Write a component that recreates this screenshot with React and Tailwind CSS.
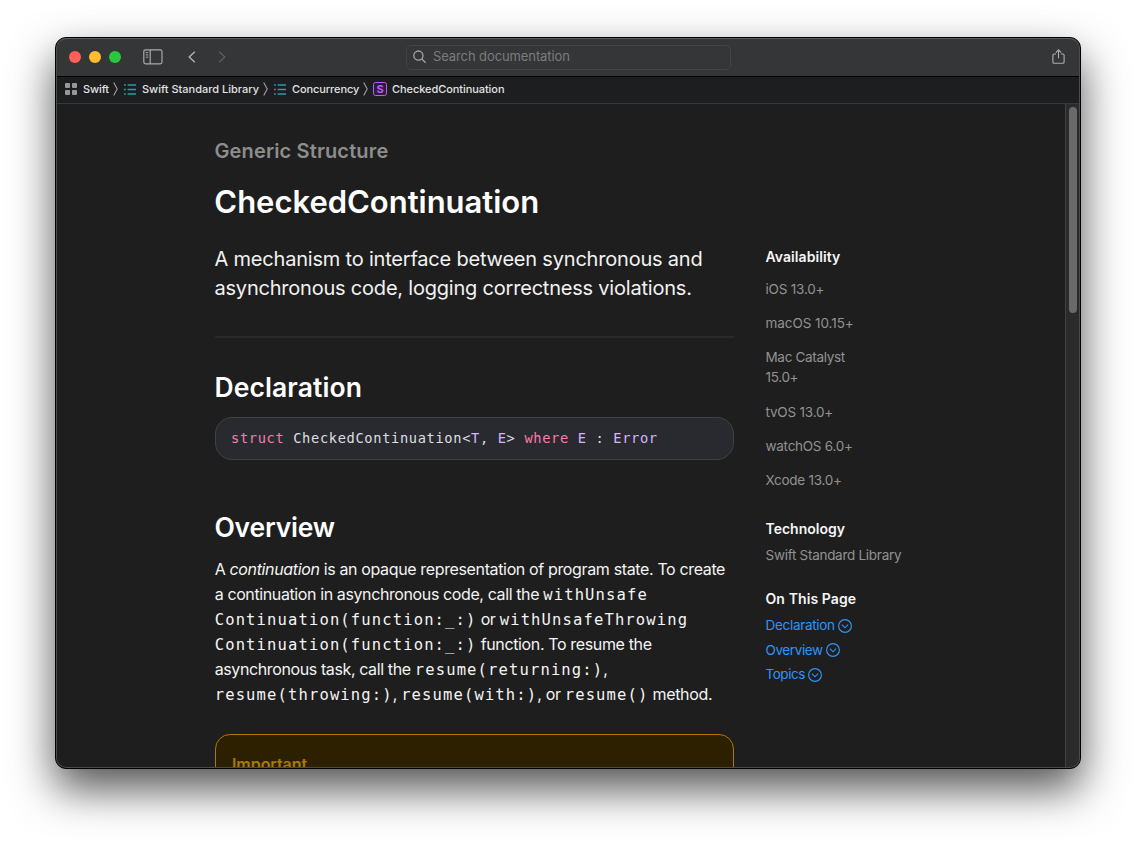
import React from "react";

const availability = [
  { name: "iOS 13.0+", cls: "tracking-[-0.2px]" },
  { name: "macOS 10.15+", cls: "tracking-[-0.06px]" },
  { name: "Mac Catalyst 15.0+", cls: "tracking-[-0.32px] -mt-[0.6px] mb-[0.6px]" },
  { name: "tvOS 13.0+", cls: "tracking-[-0.2px]" },
  { name: "watchOS 6.0+", cls: "tracking-[-0.26px]" },
  { name: "Xcode 13.0+", cls: "tracking-[-0.26px]" },
];

const sections = [
  { name: "Declaration", cls: "tracking-[-0.3px]" },
  { name: "Overview", cls: "tracking-[-0.4px]" },
  { name: "Topics", cls: "tracking-[-0.45px]" },
];

function Mono({ children }) {
  return (
    <code className="font-['DejaVu_Sans_Mono',monospace] text-[15.5px] leading-none tracking-[1.14px]">
      {children}
    </code>
  );
}

function Line({ children }) {
  return <span className="block h-[25px] whitespace-nowrap leading-[25px]">{children}</span>;
}

function SidebarIcon() {
  return (
    <svg width="20" height="16" viewBox="0 0 20 16" fill="none" stroke="#a9aaab" strokeWidth="1.2">
      <rect x="0.8" y="0.8" width="18.2" height="14" rx="1.8" />
      <path d="M7.2 1v14" />
      <path d="M2.8 3.6h2.4M2.8 5.9h2.4M2.8 8.2h2.4" strokeWidth="1" />
    </svg>
  );
}

function GridIcon() {
  return (
    <svg width="12" height="12" viewBox="0 0 12 12" fill="#98989a">
      <rect x="0" y="0" width="5" height="5" rx="1" />
      <rect x="7" y="0" width="5" height="5" rx="1" />
      <rect x="0" y="7" width="5" height="5" rx="1" />
      <rect x="7" y="7" width="5" height="5" rx="1" />
    </svg>
  );
}

function ListIcon() {
  return (
    <svg width="12" height="11" viewBox="0 0 12 11" fill="none" stroke="#2e9ba3" strokeWidth="1.5">
      <path d="M0 1h1.8M0 5.5h1.8M0 10h1.8M3.6 1H12M3.6 5.5H12M3.6 10H12" />
    </svg>
  );
}

function Separator() {
  return (
    <svg width="5" height="14" viewBox="0 0 5 14" fill="none" stroke="#a0a0a2" strokeWidth="1.1">
      <path d="M0.7 0.6L4.2 7L0.7 13.4" />
    </svg>
  );
}

function CircleDown() {
  return (
    <svg width="14" height="14" viewBox="0 0 14 14" fill="none" stroke="#2f94f8" strokeWidth="1.15">
      <circle cx="7" cy="7" r="6.4" />
      <path d="M3.9 5.7L7 8.8L10.1 5.7" />
    </svg>
  );
}

function TitleBar() {
  return (
    <header className="flex h-[39px] shrink-0 items-center border-b border-black bg-[#353638] pl-[13px] pr-[15px]">
      <div className="flex gap-2">
        <span className="size-3 rounded-full bg-[#ff5f57]" />
        <span className="size-3 rounded-full bg-[#febc2e]" />
        <span className="size-3 rounded-full bg-[#28c840]" />
      </div>
      <div className="ml-[21.6px] flex items-center">
        <SidebarIcon />
        <svg className="ml-[25px]" width="8" height="12" viewBox="0 0 8 12" fill="none" stroke="#b5b6b7" strokeWidth="1.3">
          <path d="M6.8 0.8L1.2 6L6.8 11.2" />
        </svg>
        <svg className="ml-[22px]" width="8" height="12" viewBox="0 0 8 12" fill="none" stroke="#5c5d5f" strokeWidth="1.3">
          <path d="M1.2 0.8L6.8 6L1.2 11.2" />
        </svg>
      </div>
      <div className="ml-[180.4px] flex h-[25px] w-[325px] items-center rounded-[5px] border border-[#434446] pl-[6px]">
        <svg width="14" height="14" viewBox="0 0 14 14" fill="none" stroke="#a3a4a5" strokeWidth="1.3">
          <circle cx="5.4" cy="5.6" r="4.6" />
          <path d="M8.8 9L12.6 12.8" />
        </svg>
        <span className="ml-[6px] whitespace-nowrap text-[13px] tracking-[-0.1px] text-[#7b7c7e]">Search documentation</span>
      </div>
      <svg className="mb-[2px] ml-auto" width="13" height="15" viewBox="0 0 13 15" fill="none" stroke="#adaeaf" strokeWidth="1.1">
        <path d="M4 5H2.2Q0.9 5 0.9 6.3V12.9Q0.9 14.2 2.2 14.2H10.8Q12.1 14.2 12.1 12.9V6.3Q12.1 5 10.8 5H9" />
        <path d="M6.5 9.3V1M3.8 3.6L6.5 0.9L9.2 3.6" />
      </svg>
    </header>
  );
}

function Breadcrumbs() {
  return (
    <nav className="flex h-[27px] shrink-0 items-center border-b border-[#38393b] bg-[#1d1e20] pb-[2px] pl-[9px] text-[11px] font-medium text-[#e2e2e3]">
      <GridIcon />
      <span className="ml-[6px] w-[27px] tracking-[-0.1px]">Swift</span>
      <span className="ml-[3px]"><Separator /></span>
      <span className="ml-[6px]"><ListIcon /></span>
      <span className="ml-[6px] w-[118px] whitespace-nowrap">Swift Standard Library</span>
      <span className="ml-[3px]"><Separator /></span>
      <span className="ml-[6px]"><ListIcon /></span>
      <span className="ml-[6px] w-[68px] tracking-[-0.1px]">Concurrency</span>
      <span className="ml-[3px]"><Separator /></span>
      <span className="ml-[5px] flex size-[14px] items-center justify-center rounded-[2.5px] border border-[#bf5af2] bg-[#2d1c38] text-[11px] font-bold leading-none text-[#bf5af2]">
        S
      </span>
      <span className="ml-[5px] tracking-[-0.07px]">CheckedContinuation</span>
    </nav>
  );
}

function Article() {
  return (
    <article className="w-[519px] shrink-0">
      <p className="-ml-[0.5px] mt-[35px] h-6 text-[20px] font-semibold leading-6 tracking-[0.14px] text-[#8d8d8d]">Generic Structure</p>
      <h1 className="-ml-[0.7px] mt-[20px] h-[38px] text-[31px] font-semibold leading-[38px] tracking-[-0.02px]">CheckedContinuation</h1>
      <div className="-ml-[0.5px] mt-[24px] text-[20px] leading-[29px] text-[#f2f2f2]">
        <span className="block whitespace-nowrap tracking-[-0.2px]">A mechanism to interface between synchronous and</span>
        <span className="block whitespace-nowrap tracking-[-0.21px]">asynchronous code, logging correctness violations.</span>
      </div>
      <hr className="mt-[33px] border-0 border-t-2 border-[#292929]" />
      <h2 className="-ml-[0.6px] mt-[33px] h-8 text-[26.5px] font-semibold leading-8 tracking-[0.1px]">Declaration</h2>
      <pre className="mt-[14px] flex h-[43px] items-center rounded-[17px] border border-[#414146] bg-[#292a2f] px-[15px] font-['DejaVu_Sans_Mono',monospace] text-[13.7px] tracking-[0.65px] text-[#dedee0]">
        <code className="font-['DejaVu_Sans_Mono',monospace]">
          <span className="text-[#fc79ac]">struct</span>
          {" CheckedContinuation<"}
          <span className="text-[#d6b6fb]">T</span>
          {", "}
          <span className="text-[#d6b6fb]">E</span>
          {"> "}
          <span className="text-[#fc79ac]">where</span>{" "}
          <span className="text-[#d6b6fb]">E</span>
          {" : "}
          <span className="text-[#d6b6fb]">Error</span>
        </code>
      </pre>
      <h2 className="-ml-[0.6px] mt-[51px] h-8 text-[26.5px] font-semibold leading-8 tracking-[-0.2px]">Overview</h2>
      <p className="-ml-[0.3px] mt-[14px] text-[16px] tracking-[-0.36px] text-[#f4f4f4]">
        <Line>A <em>continuation</em> is an opaque representation of program state. To create</Line>
        <Line><span className="tracking-[-0.39px]">a continuation in asynchronous code, call the </span><Mono>withUnsafe</Mono></Line>
        <Line><Mono>Continuation(function:_:)</Mono> or <Mono>withUnsafeThrowing</Mono></Line>
        <Line><Mono>Continuation(function:_:)</Mono> function. To resume the</Line>
        <Line><span className="tracking-[-0.39px]">asynchronous task, call the </span><Mono>resume(returning:)</Mono>,</Line>
        <Line><Mono>resume(throwing:)</Mono>, <Mono>resume(with:)</Mono>, or <Mono>resume()</Mono> method.</Line>
      </p>
      <section className="mt-[27px] h-[120px] rounded-[15px] border border-[#a97b06] bg-[#2c2000] px-4 pt-[17px]">
        <h3 className="text-[16px] font-semibold leading-6 tracking-[-0.06px] text-[#a97b06]">Important</h3>
      </section>
    </article>
  );
}

function Aside() {
  return (
    <aside className="ml-[31.5px] mt-[143px] w-[160px] text-[13.5px] leading-5 text-[#929292]">
      <h4 className="text-[14px] font-semibold tracking-[0.08px] text-[#f5f5f5]">Availability</h4>
      <ul className="mt-[12px] flex w-[100px] flex-col gap-[14.3px]">
        {availability.map((a) => (
          <li key={a.name} className={a.cls}>{a.name}</li>
        ))}
      </ul>
      <h4 className="mt-[29px] text-[14px] font-semibold text-[#f5f5f5]">Technology</h4>
      <p className="mt-[6px] whitespace-nowrap tracking-[-0.28px]">Swift Standard Library</p>
      <h4 className="mt-[24px] text-[14px] font-semibold tracking-[0.1px] text-[#f5f5f5]">On This Page</h4>
      <ul className="mt-[6px] flex flex-col gap-[4.5px] text-[#2f94f8]">
        {sections.map((s) => (
          <li key={s.name} className="flex items-center gap-[3.5px]">
            <span className={s.cls}>{s.name}</span>
            <span className="pt-px"><CircleDown /></span>
          </li>
        ))}
      </ul>
    </aside>
  );
}

export default function App() {
  return (
    <div className="h-[842px] w-[1136px] overflow-hidden bg-white pl-[55px] pt-[37px] font-['Inter',sans-serif] text-white">
      <div className="relative flex h-[732px] w-[1026px] flex-col overflow-hidden rounded-[11px] border border-black bg-[#1e1e1e] shadow-[0_20px_44px_rgba(0,0,0,0.68)]">
        <TitleBar />
        <Breadcrumbs />
        <div className="flex min-h-0 flex-1 overflow-hidden">
          <main className="flex min-w-0 flex-1 items-start overflow-hidden pl-[159px]">
            <Article />
            <Aside />
          </main>
          <div className="w-[15px] shrink-0 border-l border-[#414141] bg-[#2b2b2b] pl-[3px] pt-[3px]">
            <div className="h-[206px] w-[8px] rounded-full bg-[#6a6a6a]" />
          </div>
        </div>
        <div className="pointer-events-none absolute inset-0 rounded-[10px] border border-[#5b5c5d] border-x-[#4b4b4c] border-b-[#4b4b4c]" />
      </div>
    </div>
  );
}
